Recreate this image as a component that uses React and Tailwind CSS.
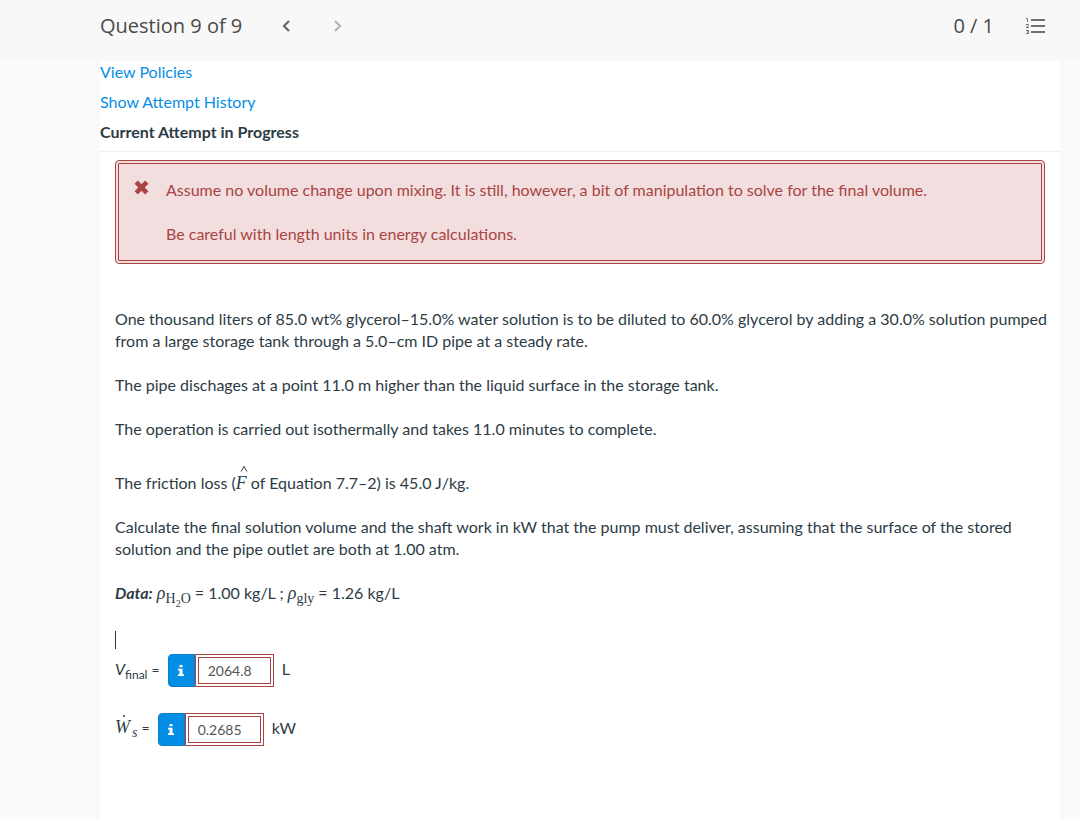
import React from "react";

function Header() {
  return (
    <header className="flex h-[61px] items-start justify-between bg-[#f8f8f8] pl-[100px] pr-[35px] pt-3 font-['Open_Sans',sans-serif] text-xl leading-7 text-[#4a4a4a]">
      <div className="flex items-center">
        <h1>Question 9 of 9</h1>
        <nav className="ml-[38px] flex items-center gap-10">
          <button type="button" aria-label="Previous question" className="flex h-7 w-3 items-center justify-center text-[#666]">
            <svg viewBox="0 0 8 12" className="h-3 w-2" fill="none" stroke="currentColor" strokeWidth="2.2">
              <path d="M7 1 2 6l5 5" />
            </svg>
          </button>
          <button type="button" disabled aria-label="Next question" className="flex h-7 w-3 items-center justify-center text-[#b5b5b5]">
            <svg viewBox="0 0 8 12" className="h-3 w-2" fill="none" stroke="currentColor" strokeWidth="2.2">
              <path d="m1 1 5 5-5 5" />
            </svg>
          </button>
        </nav>
      </div>
      <div className="flex items-center gap-8">
        <span>0 / 1</span>
        <button type="button" aria-label="Question list" className="flex h-7 items-center text-[#707070]">
          <svg viewBox="0 0 19 16" className="h-4 w-[19px]" fill="none" stroke="currentColor">
            <path strokeWidth="2" d="M5 2h14M5 8h14M5 14h14" />
            <path strokeWidth="1" d="M0 .5h1.5V4M0 6.5h2.5v1L.5 9v.5H3M0 12.5h2.5v3H0M1 14h1.5" />
          </svg>
        </button>
      </div>
    </header>
  );
}

function Alert() {
  return (
    <div role="alert" className="mx-[15px] mt-2 flex gap-[17px] rounded border-4 border-double border-[#a94442] bg-[#f2dede] p-[15px] text-[#a94442]">
      <svg viewBox="0 0 15 16" className="h-4 w-[15px] shrink-0" fill="none" stroke="currentColor" strokeWidth="4.6">
        <path d="M2.2 3.2 12.8 13.8M12.8 3.2 2.2 13.8" />
      </svg>
      <div className="flex flex-col gap-[22px]">
        <p>Assume no volume change upon mixing. It is still, however, a bit of manipulation to solve for the final volume.</p>
        <p>Be careful with length units in energy calculations.</p>
      </div>
    </div>
  );
}

function Rho({ children }) {
  return (
    <span className="font-['Liberation_Serif',serif]">
      <i className="text-lg leading-none">ρ</i>
      <span className="relative top-1 text-sm">{children}</span>
    </span>
  );
}

function Answer({ id, label, value, unit }) {
  return (
    <div className="flex items-center">
      <label htmlFor={id} className="mr-2 pb-1">{label}</label>
      <button type="button" aria-label="Answer information" className="flex h-[33px] w-[27px] items-center justify-center rounded-l-sm border border-[#0b7fc9] bg-[#058ee6] text-white">
        <svg viewBox="0 0 6 11" className="h-[11px] w-[6px]" fill="currentColor">
          <path d="M1.5 0h3v2.3h-3zM0 3.7h4.5v5.5H6V11H0V9.2h1.5V5.5H0z" />
        </svg>
      </button>
      <input id={id} defaultValue={value} className="h-[33px] w-[79px] border-4 border-double border-[#a94442] bg-white pl-[9px] text-sm text-[#555] outline-none" />
      <span className="ml-2 pb-1">{unit}</span>
    </div>
  );
}

export default function App() {
  return (
    <div className="flex min-h-screen flex-col bg-[#fafafa]">
      <Header />
      <main className="ml-[100px] mr-5 grow bg-white font-['Lato',sans-serif] text-base leading-[22px] text-[#2d3b45]">
        <div className="flex flex-col items-start gap-2 border-b border-[#eee] pb-2">
          <a href="#policies" className="text-[#058ee6]">View Policies</a>
          <a href="#history" className="text-[#058ee6]">Show Attempt History</a>
          <h2 className="font-bold">Current Attempt in Progress</h2>
        </div>
        <Alert />
        <div className="flex flex-col gap-[22px] pl-[15px] pr-2 pt-11">
          <p>
            One thousand liters of 85.0 wt% glycerol–15.0% water solution is to be diluted to 60.0% glycerol by adding a 30.0% solution pumped from a large storage tank through a 5.0–cm ID pipe at a steady rate.
          </p>
          <p>The pipe dischages at a point 11.0 m higher than the liquid surface in the storage tank.</p>
          <p>The operation is carried out isothermally and takes 11.0 minutes to complete.</p>
          <p className="h-8 pt-[10px]">
            The friction loss (
            <span className="relative inline-block font-['Liberation_Serif',serif] text-lg leading-none italic">
              F
              <svg viewBox="0 0 8 6" className="absolute -top-2 left-1 h-1.5 w-2" fill="none" stroke="currentColor">
                <path d="m1 5.5 3-5 3 5" />
              </svg>
            </span>
            {" "}of Equation 7.7–2) is 45.0 J/kg.
          </p>
          <p>
            Calculate the final solution volume and the shaft work in kW that the pump must deliver, assuming that the surface of the stored solution and the pipe outlet are both at 1.00 atm.
          </p>
          <p className="h-[22px] whitespace-nowrap">
            <b><i>Data:</i></b> <Rho>H<span className="relative top-1 text-[10px]">2</span>O</Rho> = 1.00 kg/L ; <Rho>gly</Rho> = 1.26 kg/L
          </p>
        </div>
        <div className="px-[15px] pb-16 pt-[27px]">
          <div className="mb-[5px] h-[18px] w-px bg-[#2d3b45]" />
          <div className="flex flex-col gap-[26px]">
            <Answer
              id="volume"
              value="2064.8"
              unit="L"
              label={<><i>V</i><span className="relative top-1 text-xs">final</span> <span className="text-sm">=</span></>}
            />
            <Answer
              id="work"
              value="0.2685"
              unit="kW"
              label={
                <>
                  <span className="relative font-['Liberation_Serif',serif] text-lg leading-none italic">
                    W
                    <span className="absolute -top-0.5 left-2 size-0.5 rounded-full bg-current" />
                    <span className="relative top-1 ml-0.5 text-sm">s</span>
                  </span>{" "}
                  <span className="text-sm">=</span>
                </>
              }
            />
          </div>
        </div>
      </main>
    </div>
  );
}
